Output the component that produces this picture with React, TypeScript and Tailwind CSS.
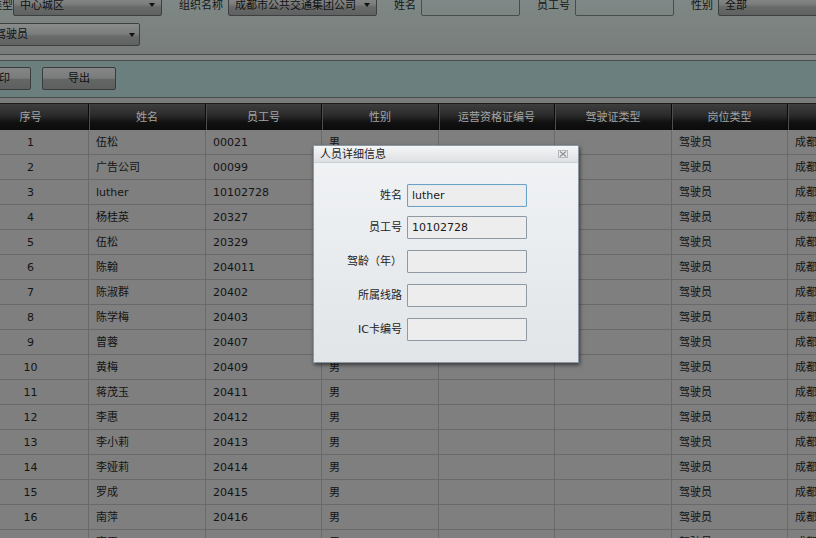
import React from 'react';

const COL_W = ['w-[116px]', 'w-[117px]', 'w-[116px]', 'w-[117px]', 'w-[116px]', 'w-[117px]', 'w-[116px]', 'w-[140px]'];

const HEADERS = ['序号', '姓名', '员工号', '性别', '运营资格证编号', '驾驶证类型', '岗位类型', '所属组织'];

const ROWS: [string, string][] = [
  ['伍松', '00021'],
  ['广告公司', '00099'],
  ['luther', '10102728'],
  ['杨桂英', '20327'],
  ['伍松', '20329'],
  ['陈翰', '204011'],
  ['陈淑群', '20402'],
  ['陈学梅', '20403'],
  ['曾蓉', '20407'],
  ['黄梅', '20409'],
  ['蒋茂玉', '20411'],
  ['李惠', '20412'],
  ['李小莉', '20413'],
  ['李娅莉', '20414'],
  ['罗成', '20415'],
  ['南萍', '20416'],
  ['李平', '20417'],
];

const Arrow = () => (
  <svg width="6" height="4" viewBox="0 0 6 4" className="shrink-0">
    <path d="M0 0 H6 L3 4 Z" fill="#111" />
  </svg>
);

const Select = ({ text, w }: { text: string; w: string }) => (
  <div
    className={`${w} h-[22px] shrink-0 flex items-center justify-between pl-[6px] pr-[6px] border border-[#3d4040] rounded-[2px] bg-[linear-gradient(to_bottom,#8a8c8c_0%,#7c7e7e_45%,#686a6a_60%,#5f6161_100%)] text-[#111]`}
  >
    <span className="whitespace-nowrap">{text}</span>
    <Arrow />
  </div>
);

const Label = ({ text, w }: { text: string; w: string }) => (
  <div className={`${w} shrink-0 text-right pr-[5px] text-[#151515] whitespace-nowrap`}>{text}</div>
);

const TextBox = () => (
  <div className="w-[99px] h-[22px] shrink-0 border border-[#474d4d] rounded-[2px]" />
);

const ToolButton = ({ text, cls }: { text: string; cls: string }) => (
  <div
    className={`${cls} h-[23px] shrink-0 flex items-center justify-center border border-[#3a3c3c] rounded-[2px] bg-[linear-gradient(to_bottom,#858787_0%,#7a7c7c_48%,#646666_55%,#5e6060_100%)] text-[#111]`}
  >
    {text}
  </div>
);

const FormRow = ({ label, value, focus, mt }: { label: string; value?: string; focus?: boolean; mt: string }) => (
  <div className={`flex items-center ${mt}`}>
    <div className="w-[88px] text-right text-[#1c1c1c] whitespace-nowrap">{label}</div>
    <div
      className={`ml-[5px] w-[120px] h-[23px] flex items-center pl-[4px] bg-[#ededed] rounded-[1px] border text-[#1a1a1a] ${
        focus ? 'border-[#6aa2c8] shadow-[inset_0_0_1px_#9cc6e2]' : 'border-[#8e99a4]'
      }`}
    >
      {value}
    </div>
  </div>
);

export default function App() {
  return (
    <div className="w-[816px] h-[538px] overflow-hidden relative bg-[#7f7f7f] text-[11px] leading-none font-['DejaVu_Sans','Noto_Sans_CJK_SC',sans-serif]">
      {/* filter area */}
      <div className="h-[54px] bg-[linear-gradient(to_bottom,#7f8886,#787d7b)] overflow-hidden">
        <div className="flex items-center mt-[-6px] ml-[-31px]">
          <Label text="区域类型" w="w-[44px]" />
          <Select text="中心城区" w="w-[149px]" />
          <Label text="组织名称" w="w-[66px]" />
          <Select text="成都市公共交通集团公司" w="w-[149px]" />
          <Label text="姓名" w="w-[44px]" />
          <TextBox />
          <Label text="员工号" w="w-[55px]" />
          <TextBox />
          <Label text="性别" w="w-[44px]" />
          <Select text="全部" w="w-[149px]" />
        </div>
        <div className="flex items-center mt-[7px] ml-[-75px]">
          <Label text="岗位类型" w="w-[66px]" />
          <div className="w-[149px] h-[23px] shrink-0 flex items-center justify-between pl-[3px] pr-[4px] border border-[#3d4040] rounded-[2px] bg-[linear-gradient(to_bottom,#8a8c8c_0%,#7c7e7e_45%,#686a6a_60%,#5f6161_100%)] text-[#111]">
            <span>驾驶员</span>
            <Arrow />
          </div>
        </div>
      </div>
      <div className="h-[1px] bg-[#4a4e4d]" />
      <div className="h-[5px] bg-[#868988]" />
      <div className="h-[1px] bg-[#464a4a]" />

      {/* toolbar */}
      <div className="h-[36px] bg-[#6b7f7f] flex items-center gap-[11px] ml-[-43px] pb-[1px]">
        <ToolButton text="打印" cls="w-[74px] pl-[10px]" />
        <ToolButton text="导出" cls="w-[74px]" />
      </div>
      <div className="h-[1px] bg-[#4b4d4d]" />
      <div className="h-[5px] bg-[#7b7c7c]" />

      {/* table */}
      <div className="ml-[-27px]">
        <div className="flex h-[27px] bg-[linear-gradient(to_bottom,#3e3e3e_0%,#2a2a2a_45%,#111111_70%,#0b0b0b_100%)] border-t border-[#1c1c1c]">
          {HEADERS.map((h, i) => (
            <div
              key={h}
              className={`${COL_W[i]} shrink-0 flex items-center justify-center text-[#a3a6a6] border-r border-[#0a0a0a] shadow-[inset_1px_0_0_#4d4d4d] whitespace-nowrap`}
            >
              {h}
            </div>
          ))}
        </div>
        {ROWS.map(([name, no], r) => {
          const cells = [String(r + 1), name, no, '男', '', '', '驾驶员', '成都市公共交通集团公司'];
          return (
            <div key={r} className="flex h-[25px] border-b border-[#696969]">
              {cells.map((c, i) => (
                <div
                  key={i}
                  className={`${COL_W[i]} shrink-0 flex items-center border-r border-[#6a6a6a] text-[#141414] whitespace-nowrap overflow-hidden ${
                    i === 0 ? 'justify-center' : 'pl-[7px]'
                  }`}
                >
                  {c}
                </div>
              ))}
            </div>
          );
        })}
      </div>

      {/* detail dialog */}
      <div className="absolute left-[313px] top-[145px] w-[266px] h-[218px] border border-[#8b98a4] shadow-[1px_2px_4px_rgba(0,0,0,0.55)] flex flex-col bg-[linear-gradient(to_bottom,#f1f3f5,#e1e5e8)]">
        <div className="h-[17px] shrink-0 flex items-center justify-between pl-[6px] pr-[10px] bg-[linear-gradient(to_bottom,#f5f6f7,#dde0e3)] border-b border-[#cbd0d4] text-[#1e1e1e]">
          <span>人员详细信息</span>
          <svg width="10" height="8" viewBox="0 0 10 8">
            <rect x="0.5" y="0.5" width="9" height="7" fill="none" stroke="#b4b8bb" />
            <path d="M2 1.5 L8 6.5 M8 1.5 L2 6.5" stroke="#8f9497" strokeWidth="1.4" />
          </svg>
        </div>
        <div className="flex flex-col pt-[21px]">
          <FormRow label="姓名" value="luther" focus mt="mt-0" />
          <FormRow label="员工号" value="10102728" mt="mt-[9px]" />
          <FormRow label="驾龄（年）" mt="mt-[11px]" />
          <FormRow label="所属线路" mt="mt-[11px]" />
          <FormRow label="IC卡编号" mt="mt-[11px]" />
        </div>
      </div>
    </div>
  );
}
